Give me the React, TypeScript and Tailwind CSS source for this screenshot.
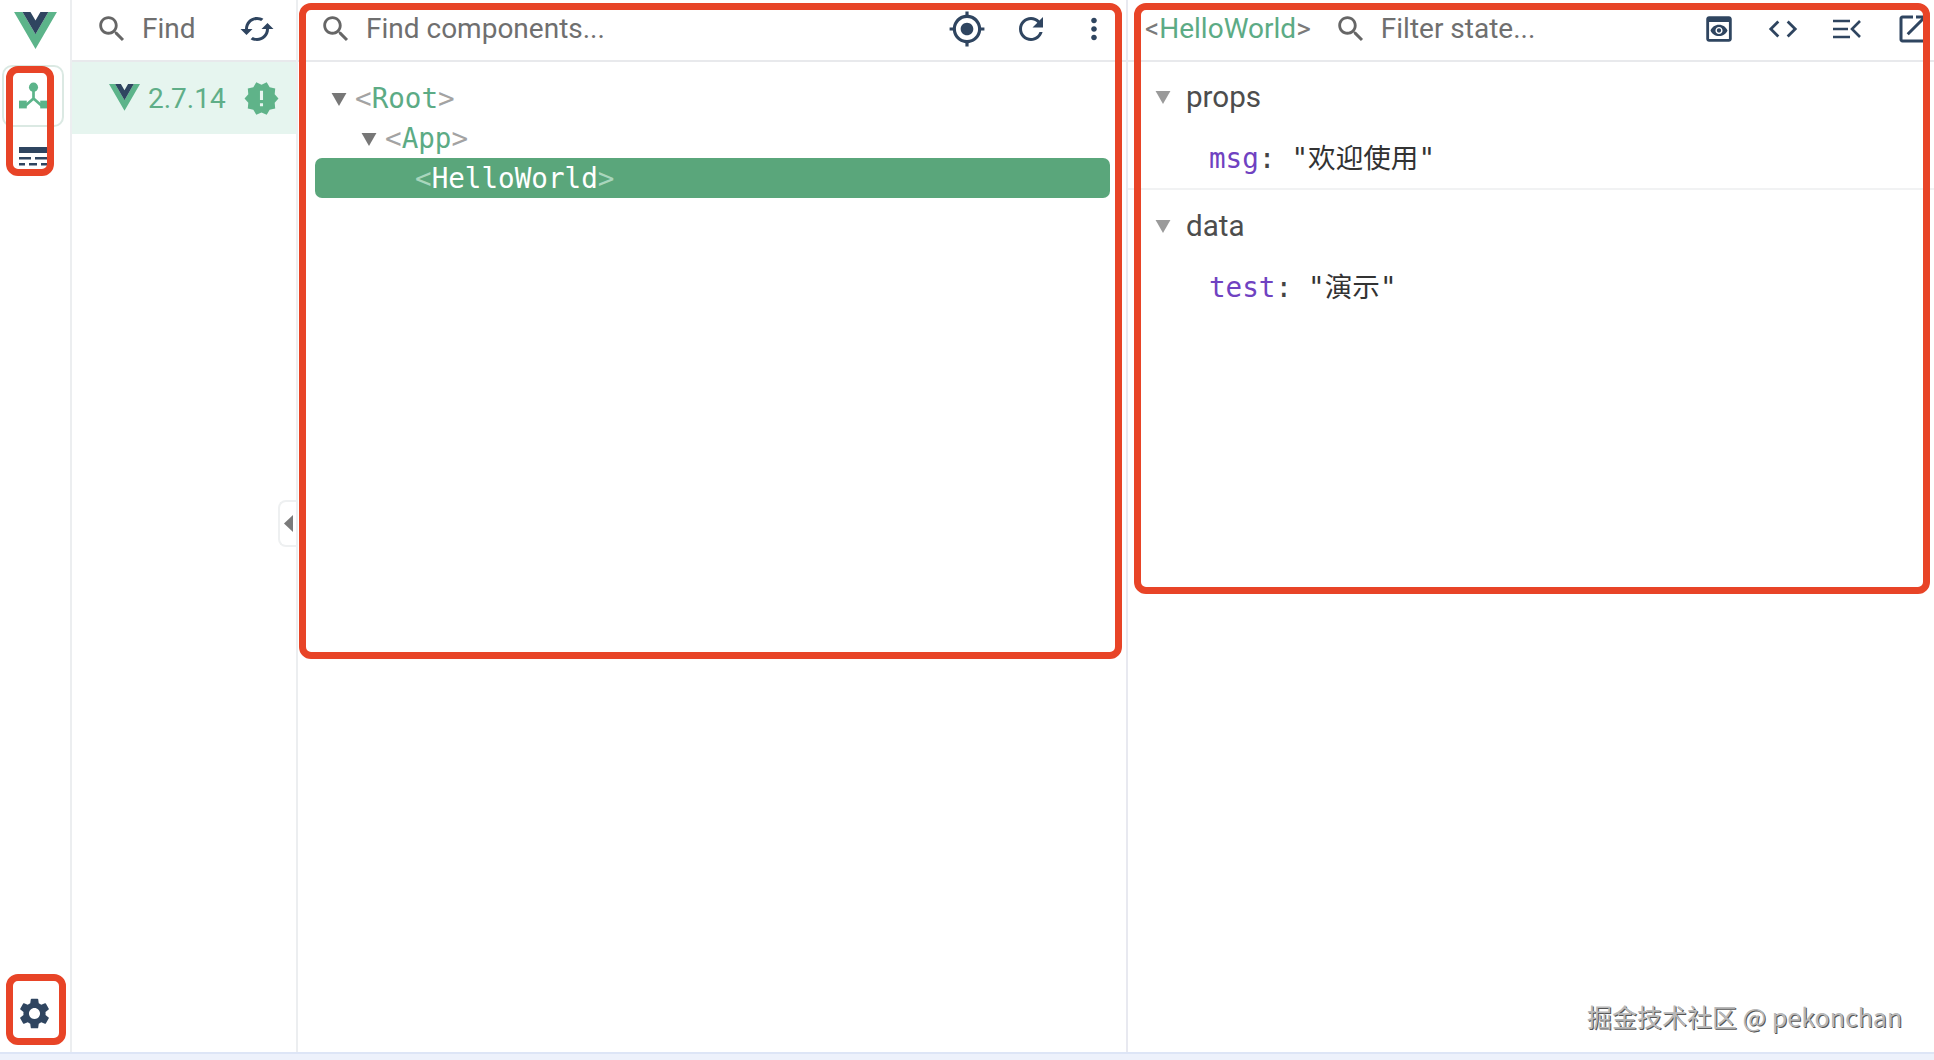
import type { ReactNode } from 'react';

const paths = {
    search: 'M15.5 14h-.79l-.28-.27C15.41 12.59 16 11.11 16 9.5 16 5.91 13.09 3 9.5 3S3 5.91 3 9.5 5.91 16 9.5 16c1.61 0 3.09-.59 4.23-1.57l.27.28v.79l5 4.99L20.49 19l-4.99-5zm-6 0C7.01 14 5 11.99 5 9.5S7.01 5 9.5 5 14 7.01 14 9.5 11.99 14 9.5 14z',
    cached: 'M19 8l-4 4h3c0 3.31-2.69 6-6 6-1.01 0-1.97-.25-2.8-.7l-1.46 1.46C8.97 19.54 10.43 20 12 20c4.42 0 8-3.58 8-8h3l-4-4zM6 12c0-3.31 2.69-6 6-6 1.01 0 1.97.25 2.8.7l1.46-1.46C15.03 4.46 13.57 4 12 4c-4.42 0-8 3.58-8 8H1l4 4 4-4H6z',
    gps: 'M12 8c-2.21 0-4 1.79-4 4s1.79 4 4 4 4-1.79 4-4-1.79-4-4-4zm8.94 3c-.46-4.17-3.77-7.48-7.94-7.94V1h-2v2.06C6.83 3.52 3.52 6.83 3.06 11H1v2h2.06c.46 4.17 3.77 7.48 7.94 7.94V23h2v-2.06c4.17-.46 7.48-3.77 7.94-7.94H23v-2h-2.06zM12 19c-3.87 0-7-3.13-7-7s3.13-7 7-7 7 3.13 7 7-3.13 7-7 7z',
    refresh: 'M17.65 6.35C16.2 4.9 14.21 4 12 4c-4.42 0-7.99 3.58-7.99 8s3.57 8 7.99 8c3.73 0 6.84-2.55 7.73-6h-2.08c-.82 2.33-3.04 4-5.65 4-3.31 0-6-2.69-6-6s2.69-6 6-6c1.66 0 3.14.69 4.22 1.78L13 11h7V4l-2.35 2.35z',
    more: 'M12 8c1.1 0 2-.9 2-2s-.9-2-2-2-2 .9-2 2 .9 2 2 2zm0 2c-1.1 0-2 .9-2 2s.9 2 2 2 2-.9 2-2-.9-2-2-2zm0 6c-1.1 0-2 .9-2 2s.9 2 2 2 2-.9 2-2-.9-2-2-2z',
    code: 'M9.4 16.6L4.8 12l4.6-4.6L8 6l-6 6 6 6 1.4-1.4zm5.2 0l4.6-4.6-4.6-4.6L16 6l6 6-6 6-1.4-1.4z',
    preview: 'M19 3H5c-1.11 0-2 .9-2 2v14c0 1.1.89 2 2 2h14c1.1 0 2-.9 2-2V5c0-1.1-.89-2-2-2zm0 16H5V7h14v12zm-5.5-6c0 .83-.67 1.5-1.5 1.5s-1.5-.67-1.5-1.5.67-1.5 1.5-1.5 1.5.67 1.5 1.5zM12 9c-2.73 0-5.06 1.66-6 4 .94 2.34 3.27 4 6 4s5.06-1.66 6-4c-.94-2.34-3.27-4-6-4zm0 6.5c-1.38 0-2.5-1.12-2.5-2.5s1.12-2.5 2.5-2.5 2.5 1.12 2.5 2.5-1.12 2.5-2.5 2.5z',
    open: 'M19 19H5V5h7V3H5c-1.11 0-2 .9-2 2v14c0 1.1.89 2 2 2h14c1.1 0 2-.9 2-2v-7h-2v7zM14 3v2h3.59l-9.83 9.83 1.41 1.41L19 6.41V10h2V3h-7z',
    gear: 'M19.14 12.94c.04-.3.06-.61.06-.94 0-.32-.02-.64-.07-.94l2.03-1.58a.49.49 0 0 0 .12-.61l-1.92-3.32a.488.488 0 0 0-.59-.22l-2.39.96c-.5-.38-1.03-.7-1.62-.94l-.36-2.54a.484.484 0 0 0-.48-.41h-3.84c-.24 0-.43.17-.47.41l-.36 2.54c-.59.24-1.13.57-1.62.94l-2.39-.96c-.22-.08-.47 0-.59.22L2.74 8.87c-.12.21-.08.47.12.61l2.03 1.58c-.05.3-.09.63-.09.94s.02.64.07.94l-2.03 1.58a.49.49 0 0 0-.12.61l1.92 3.32c.12.22.37.29.59.22l2.39-.96c.5.38 1.03.7 1.62.94l.36 2.54c.05.24.24.41.48.41h3.84c.24 0 .44-.17.47-.41l.36-2.54c.59-.24 1.13-.56 1.62-.94l2.39.96c.22.08.47 0 .59-.22l1.92-3.32c.12-.22.07-.47-.12-.61l-2.01-1.58zM12 15.6c-1.98 0-3.6-1.62-3.6-3.6s1.62-3.6 3.6-3.6 3.6 1.62 3.6 3.6-1.62 3.6-3.6 3.6z',
    badge: 'M23 12l-2.44-2.78.34-3.68-3.61-.82-1.89-3.18L12 3 8.6 1.54 6.71 4.72l-3.61.81.34 3.68L1 12l2.44 2.78-.34 3.69 3.61.82 1.89 3.18L12 21l3.4 1.46 1.89-3.18 3.61-.82-.34-3.68L23 12zm-10 5h-2v-2h2v2zm0-4h-2V7h2v6z',
};

function Icon({ d, className }: { d: string; className: string }) {
    return (
        <svg viewBox="0 0 24 24" fill="currentColor" className={className}>
            <path d={d} />
        </svg>
    );
}

function VueLogo({ className }: { className: string }) {
    return (
        <svg viewBox="0 0 256 221" className={className}>
            <path fill="#5cb48a" d="M0 0l128 220.8L256 0h-51.2L128 132.48 50.56 0H0z" />
            <path fill="#2f4560" d="M50.56 0L128 133.12 204.8 0h-47.36L128 51.2 97.92 0H50.56z" />
        </svg>
    );
}

function Caret({ className }: { className: string }) {
    return (
        <svg viewBox="0 0 16 14" fill="currentColor" className={className}>
            <path d="M0 0h16L8 14z" />
        </svg>
    );
}

// < and > are lighter than the tag name
function Tag({ name, angle, text }: { name: string; angle: string; text: string }) {
    return (
        <span className={`relative top-[1px] font-['DejaVu_Sans_Mono','Liberation_Mono',monospace] text-[27.6px] leading-none ${text}`}>
            <span className={angle}>&lt;</span>
            {name}
            <span className={angle}>&gt;</span>
        </span>
    );
}

function Header({ children, className }: { children: ReactNode; className: string }) {
    return <div className={`flex h-[62px] flex-none items-center border-b-2 border-[#e8e9ec] pb-[2px] ${className}`}>{children}</div>;
}

function StateSection({ title, field, value, divided }: { title: string; field: string; value: string; divided?: boolean }) {
    return (
        <div className={divided ? 'border-b-2 border-[#f1f2f3]' : ''}>
            <div className={`flex h-[70px] items-center pl-[27px] ${divided ? 'pt-[1px]' : 'pt-[2px]'}`}>
                <Caret className="h-[13px] w-[16px] text-[#9a9a9a]" />
                <span className="ml-[15px] text-[29.6px] text-[#4d4d4d]">{title}</span>
            </div>
            <div className={`flex h-[56px] items-center pl-[81px] font-['DejaVu_Sans_Mono','Noto_Sans_CJK_SC',monospace] text-[27.6px] leading-none ${divided ? 'pb-[3px]' : 'pb-[1px]'}`}>
                <span className="text-[#6f42c1]">{field}</span>
                <span className="text-[#444]">:</span>
                <span className="ml-[16px] text-[#333]">{value}</span>
            </div>
        </div>
    );
}

function Marker({ className }: { className: string }) {
    return <div className={`pointer-events-none absolute rounded-[12px] border-[7px] border-[#e84427] ${className}`} />;
}

export default function App() {
    return (
        <div className="relative flex h-[1060px] w-[1934px] flex-col overflow-hidden bg-white font-['Roboto',sans-serif]">
            <div className="flex min-h-0 flex-1">
                {/* Icon rail */}
                <nav className="flex w-[72px] flex-none flex-col items-center border-r-2 border-[#eceef0] pt-[12px]">
                    <VueLogo className="h-[37px] w-[43px]" />
                    <div className="mt-[16px] flex h-[62px] w-[62px] -translate-x-[2px] items-center justify-center rounded-[10px] border-2 border-[#dbe9e3]">
                        <svg viewBox="0 0 28 28" className="h-[29px] w-[29px]">
                            <path d="M14 8v8M14 16l-9 8M14 16l9 8" stroke="#5cb48a" strokeWidth="2.6" fill="none" />
                            <circle cx="14" cy="5" r="4.4" fill="#5cb48a" />
                            <rect x="0" y="18" width="7.5" height="7.5" fill="#5cb48a" />
                            <rect x="20.5" y="18" width="7.5" height="7.5" fill="#5cb48a" />
                        </svg>
                    </div>
                    <svg viewBox="0 0 28 20" className="mt-[20px] h-[20px] w-[28px] -translate-x-[2px]">
                        <rect x="0" y="0" width="28" height="6" fill="#2f4560" />
                        <path d="M0 10h12v2.4H0zM16 10h12v2.4H16zM0 16h6v2.4H0zM10 16h8v2.4h-8zM22 16h6v2.4h-6z" fill="#2f4560" />
                    </svg>
                    <div className="mt-auto pb-[20px]">
                        <Icon d={paths.gear} className="h-[37px] w-[37px] -translate-x-[1px] text-[#2f4560]" />
                    </div>
                </nav>

                {/* App list */}
                <aside className="relative flex w-[226px] flex-none flex-col border-r-2 border-[#eceef0]">
                    <Header className="pl-[23px]">
                        <Icon d={paths.search} className="h-[34px] w-[34px] text-[#666]" />
                        <span className="ml-[13px] text-[28px] text-[#6f6f6f]">Find</span>
                        <Icon d={paths.cached} className="ml-[43px] h-[36px] w-[36px] text-[#2f4560]" />
                    </Header>
                    <div className="flex h-[72px] items-center bg-[#e6f5ef] pl-[37px]">
                        <VueLogo className="h-[27px] w-[31px] -translate-y-[1px]" />
                        <span className="relative top-[1px] ml-[8px] text-[28px] text-[#5fae88]">2.7.14</span>
                        <Icon d={paths.badge} className="ml-[17px] h-[37px] w-[37px] text-[#5fb389]" />
                    </div>
                    <div className="absolute right-0 top-[500px] flex h-[47px] w-[18px] items-center justify-center rounded-l-[8px] border-2 border-r-0 border-[#eef0f1] bg-white">
                        <svg viewBox="0 0 9 17" fill="#7a7a7a" className="h-[17px] w-[9px]">
                            <path d="M9 0v17L0 8.5z" />
                        </svg>
                    </div>
                </aside>

                {/* Component tree */}
                <section className="flex w-[830px] flex-none flex-col border-r-2 border-[#e8e9f0]">
                    <Header className="pl-[21px] pr-[15px]">
                        <Icon d={paths.search} className="h-[34px] w-[34px] text-[#666]" />
                        <span className="ml-[13px] text-[28px] text-[#6f6f6f]">Find components...</span>
                        <Icon d={paths.gps} className="ml-auto h-[38px] w-[38px] text-[#2f4560]" />
                        <Icon d={paths.refresh} className="ml-[27px] h-[36px] w-[36px] text-[#2f4560]" />
                        <Icon d={paths.more} className="ml-[28px] h-[34px] w-[34px] text-[#2f4560]" />
                    </Header>
                    <div className="pl-[17px] pr-[16px] pt-[16px]">
                        <div className="flex h-[40px] items-center pl-[16px] pt-[2px]">
                            <Caret className="h-[13px] w-[16px] text-[#777]" />
                            <span className="ml-[8px]"><Tag name="Root" angle="text-[#a3a3a3]" text="text-[#5cab85]" /></span>
                        </div>
                        <div className="flex h-[40px] items-center pl-[46px] pt-[2px]">
                            <Caret className="h-[13px] w-[16px] text-[#777]" />
                            <span className="ml-[8px]"><Tag name="App" angle="text-[#a3a3a3]" text="text-[#5cab85]" /></span>
                        </div>
                        <div className="flex h-[40px] items-center rounded-[7px] bg-[#5aa67b] pl-[100px]">
                            <Tag name="HelloWorld" angle="text-[#a9d6bd]" text="text-white" />
                        </div>
                    </div>
                </section>

                {/* Inspected state */}
                <section className="flex min-w-0 flex-1 flex-col">
                    <Header className="pl-[17px] pr-[3px]">
                        <span className="text-[28px]">
                            <span className="text-[#7a7a7a]">&lt;</span>
                            <span className="text-[#5cab85]">HelloWorld</span>
                            <span className="text-[#7a7a7a]">&gt;</span>
                        </span>
                        <Icon d={paths.search} className="ml-[23px] h-[34px] w-[34px] text-[#666]" />
                        <span className="ml-[13px] text-[28px] text-[#6f6f6f]">Filter state...</span>
                        <Icon d={paths.preview} className="ml-auto h-[34px] w-[34px] text-[#2f4560]" />
                        <Icon d={paths.code} className="ml-[30px] h-[34px] w-[34px] text-[#2f4560]" />
                        <svg viewBox="0 0 30 24" fill="none" stroke="#2f4560" strokeWidth="2.6" className="ml-[32px] h-[24px] w-[30px]">
                            <path d="M1 4h17M1 12h15M1 20h17M28 4l-8 8 8 8" />
                        </svg>
                        <Icon d={paths.open} className="ml-[33px] h-[36px] w-[36px] text-[#2f4560]" />
                    </Header>
                    <StateSection title="props" field="msg" value={'"欢迎使用"'} divided />
                    <StateSection title="data" field="test" value={'"演示"'} />
                </section>
            </div>

            {/* Bottom strip of the devtools window */}
            <div className="h-[8px] flex-none border-t-2 border-[#dde5f6] bg-[#edf1fb]" />

            {/* Annotations over the screenshot */}
            <Marker className="left-[6px] top-[66px] h-[110px] w-[48px]" />
            <Marker className="left-[6px] top-[974px] h-[71px] w-[60px]" />
            <Marker className="left-[299px] top-[3px] h-[656px] w-[823px]" />
            <Marker className="left-[1134px] top-[3px] h-[591px] w-[796px]" />

            <div className="absolute left-[1587px] top-[1001px] font-['Noto_Sans_CJK_SC',sans-serif] text-[25px] leading-[30px] text-[#b9b9b9] [text-shadow:1px_1px_0_#555]">
                掘金技术社区 @ pekonchan
            </div>
        </div>
    );
}
